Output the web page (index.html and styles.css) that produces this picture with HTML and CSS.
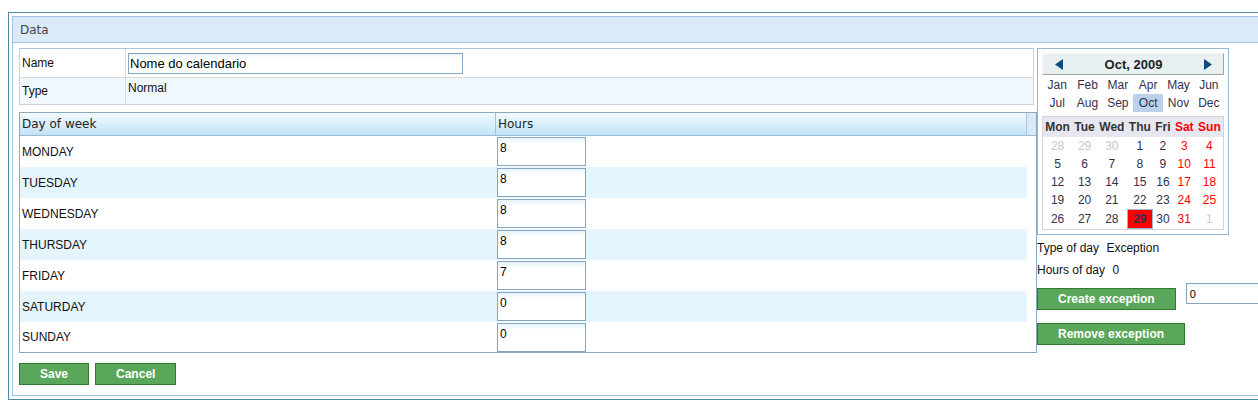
FILE: index.html
```html
<!DOCTYPE html>
<html>
<head>
<meta charset="utf-8">
<title>Calendar</title>
<link rel="stylesheet" href="styles.css">
</head>
<body>
<div class="window">
  <div class="panel">
    <div class="panel-head">Data</div>
    <div class="panel-body">
      <div class="main">
        <div class="props">
          <div class="lbl r1">Name</div>
          <div class="val r1 name-val"><input class="name-input" type="text" value="Nome do calendario"></div>
          <div class="lbl r2 type-lbl">Type</div>
          <div class="val r2 type-val">Normal</div>
        </div>
        <div class="days">
          <div class="days-head">
            <div class="hc c-day">Day of week</div>
            <div class="hc c-hours">Hours</div>
            <div class="gutter"></div>
          </div>
          <div class="days-row"><div class="c-day">MONDAY</div><div class="c-hours"><input class="hours-input" type="text" value="8"></div></div>
          <div class="days-row alt"><div class="c-day">TUESDAY</div><div class="c-hours"><input class="hours-input" type="text" value="8"></div></div>
          <div class="days-row"><div class="c-day">WEDNESDAY</div><div class="c-hours"><input class="hours-input" type="text" value="8"></div></div>
          <div class="days-row alt"><div class="c-day">THURSDAY</div><div class="c-hours"><input class="hours-input" type="text" value="8"></div></div>
          <div class="days-row"><div class="c-day">FRIDAY</div><div class="c-hours"><input class="hours-input" type="text" value="7"></div></div>
          <div class="days-row alt"><div class="c-day">SATURDAY</div><div class="c-hours"><input class="hours-input" type="text" value="0"></div></div>
          <div class="days-row last"><div class="c-day">SUNDAY</div><div class="c-hours"><input class="hours-input" type="text" value="0"></div></div>
        </div>
        <div class="actions">
          <button class="btn">Save</button>
          <button class="btn">Cancel</button>
        </div>
      </div>
      <div class="side">
        <div class="cal">
          <div class="cal-head">
            <svg class="arr" width="8" height="11" viewBox="0 0 8 11"><polygon points="8,0 8,11 0,5.5"/></svg>
            <span class="cal-title">Oct, 2009</span>
            <svg class="arr" width="8" height="11" viewBox="0 0 8 11"><polygon points="0,0 0,11 8,5.5"/></svg>
          </div>
          <table class="months">
            <tr><td>Jan</td><td>Feb</td><td>Mar</td><td>Apr</td><td>May</td><td>Jun</td></tr>
            <tr><td>Jul</td><td>Aug</td><td>Sep</td><td class="sel">Oct</td><td>Nov</td><td>Dec</td></tr>
          </table>
          <table class="dgrid">
            <tr><th>Mon</th><th>Tue</th><th>Wed</th><th>Thu</th><th>Fri</th><th class="we">Sat</th><th class="we">Sun</th></tr>
            <tr><td class="om">28</td><td class="om">29</td><td class="om">30</td><td>1</td><td>2</td><td class="we">3</td><td class="we">4</td></tr>
            <tr><td>5</td><td>6</td><td>7</td><td>8</td><td>9</td><td class="we">10</td><td class="we">11</td></tr>
            <tr><td>12</td><td>13</td><td>14</td><td>15</td><td>16</td><td class="we">17</td><td class="we">18</td></tr>
            <tr><td>19</td><td>20</td><td>21</td><td>22</td><td>23</td><td class="we">24</td><td class="we">25</td></tr>
            <tr><td>26</td><td>27</td><td>28</td><td class="today">29</td><td>30</td><td class="we">31</td><td class="om">1</td></tr>
          </table>
        </div>
        <div class="info">Type of day <span class="iv">Exception</span></div>
        <div class="info">Hours of day <span class="iv">0</span></div>
        <div class="ex-row">
          <button class="btn">Create exception</button>
          <input class="ex-input" type="text" value="0">
        </div>
        <button class="btn btn-remove">Remove exception</button>
      </div>
    </div>
  </div>
</div>
</body>
</html>
```
FILE: styles.css
```css
* { box-sizing: border-box; }
html { overflow: hidden; }
body {
  margin: 0;
  padding: 12px 0 0 8px;
  overflow: hidden;
  background: #fff;
  font-family: "Liberation Sans", Arial, sans-serif;
  font-size: 12px;
  color: #111;
}
.window {
  width: 1300px;
  border: 1px solid #4f8ba3;
  padding: 3px;
}
.panel {
  border: 1px solid #a3c1e3;
}
.panel-head {
  height: 26px;
  padding: 2px 0 0 7px;
  line-height: 23px;
  background: #dbeaf7;
  border-bottom: 1px solid #a3c1e3;
  font-family: "DejaVu Sans", sans-serif;
  font-size: 12px;
  color: #444;
}
.panel-body {
  display: flex;
  padding: 5px 0 10px 6px;
}
.main {
  width: 1018px;
  flex: none;
}
.side {
  flex: 1;
}

/* properties grid */
.props {
  display: grid;
  grid-template-columns: 106px 1fr;
  grid-template-rows: 29px 26px;
  width: 1015px;
  border: 1px solid #c9d3dd;
  border-top-color: #a9c5e1;
}
.props .lbl {
  padding-left: 2px;
  border-right: 1px solid #d9d9d9;
  display: flex;
  align-items: center;
}
.props .r1 {
  border-bottom: 1px solid #d9d9d9;
  background: #fff;
}
.props .r2 {
  background: #f0f8fd;
}
.name-val {
  padding: 4px 0 0 2px;
}
.type-val {
  padding: 3px 0 0 2px;
  line-height: 14px;
}
.name-input {
  display: block;
  width: 335px;
  height: 21px;
  margin: 0;
  padding: 0 1px;
  border: 1px solid #86a5bf;
  background: linear-gradient(#eaf5fb, #fff 5px);
  font-family: "Liberation Sans", Arial, sans-serif;
  font-size: 13px;
  color: #000;
  outline: none;
}

/* days of week */
.days {
  width: 1018px;
  margin-top: 7px;
  border: 1px solid #8aa8c2;
}
.days-head {
  display: flex;
  height: 23px;
  border-bottom: 1px solid #9cbad4;
}
.hc {
  height: 22px;
  line-height: 22px;
  padding-left: 2px;
  background: linear-gradient(#f1fbff, #c3e3f7);
  border-right: 1px solid #a7c3dc;
  font-family: "DejaVu Sans", sans-serif;
  font-size: 12px;
  color: #222;
}
.hc.c-day { width: 476px; }
.hc.c-hours { width: 531px; }
.gutter {
  flex: 1;
  background: #d9e9f5;
}
.days-row {
  display: flex;
  align-items: center;
  height: 31px;
  margin-right: 9px;
  background: #fff;
}
.days-row.alt { background: #e4f5fd; }
.days-row.last { height: 30px; align-items: flex-start; padding-top: 1px; }
.days-row .c-day {
  width: 476px;
  padding-left: 2px;
}
.days-row.last .c-day { line-height: 29px; }
.days-row .c-hours {
  padding-left: 1px;
}
.hours-input {
  display: block;
  width: 89px;
  height: 29px;
  margin: 0;
  padding: 3px 2px 10px 2px;
  line-height: 14px;
  border: 1px solid #86a5bf;
  background: linear-gradient(#e6f3fa, #fff 6px);
  font-family: "Liberation Sans", Arial, sans-serif;
  font-size: 12px;
  color: #000;
  outline: none;
}

/* buttons */
.actions {
  display: flex;
  gap: 6px;
  margin-top: 10px;
}
.btn {
  display: block;
  height: 22px;
  margin: 0;
  padding: 0 20px;
  border: 1px solid #2e7b2e;
  background: #5aa65a;
  color: #fff;
  font-family: "Liberation Sans", Arial, sans-serif;
  font-size: 12px;
  font-weight: bold;
  line-height: 20px;
  cursor: pointer;
}

/* calendar */
.cal {
  width: 192px;
  padding: 4px;
  border: 1px solid #97b6d1;
}
.cal-head {
  display: flex;
  align-items: center;
  justify-content: space-between;
  height: 22px;
  padding: 0 11px 0 12px;
  background: #e9f0f2;
  border: 1px solid;
  border-color: #f8f8f8 #a3a3a3 #a3a3a3 #f8f8f8;
}
.arr { display: block; fill: #0c4c7e; }
.cal-title {
  font-size: 13px;
  font-weight: bold;
  color: #222;
}
.months {
  width: 100%;
  table-layout: fixed;
  border-spacing: 0;
  margin-top: 1px;
}
.months td {
  height: 18px;
  padding: 0;
  text-align: center;
  color: #333050;
}
.months td.sel { background: #b9d1ea; }
.dgrid {
  width: 100%;
  margin-top: 4px;
  border: 1px solid #d4d4d4;
  border-spacing: 0;
}
.dgrid th {
  height: 20px;
  padding: 0 2px;
  background: #e7e7ef;
  font-weight: bold;
  color: #333;
  text-align: center;
}
.dgrid td {
  height: 18px;
  padding: 0 2px;
  text-align: center;
  color: #333050;
}
.dgrid .we { color: #f00; }
.dgrid td.om { color: #c8c8c8; }
.dgrid td.today {
  height: 20px;
  background: #f00;
  border: 1px solid #9cb7d2;
  font-weight: bold;
  color: #333050;
}

/* side info */
.info {
  margin-top: 0;
  line-height: 22px;
  color: #111;
}
.cal + .info { margin-top: 2px; }
.iv { margin-left: 4px; }
.ex-row {
  display: flex;
  align-items: flex-start;
  margin-top: 2px;
}
.ex-row .btn { margin-top: 5px; }
.ex-input {
  display: block;
  width: 100px;
  height: 21px;
  margin: 0 0 0 10px;
  padding: 0 3px;
  border: 1px solid #86a5bf;
  background: linear-gradient(#eaf5fb, #fff 5px);
  font-family: "Liberation Sans", Arial, sans-serif;
  font-size: 11px;
  color: #000;
  outline: none;
}
.btn-remove { margin-top: 13px; }
```
